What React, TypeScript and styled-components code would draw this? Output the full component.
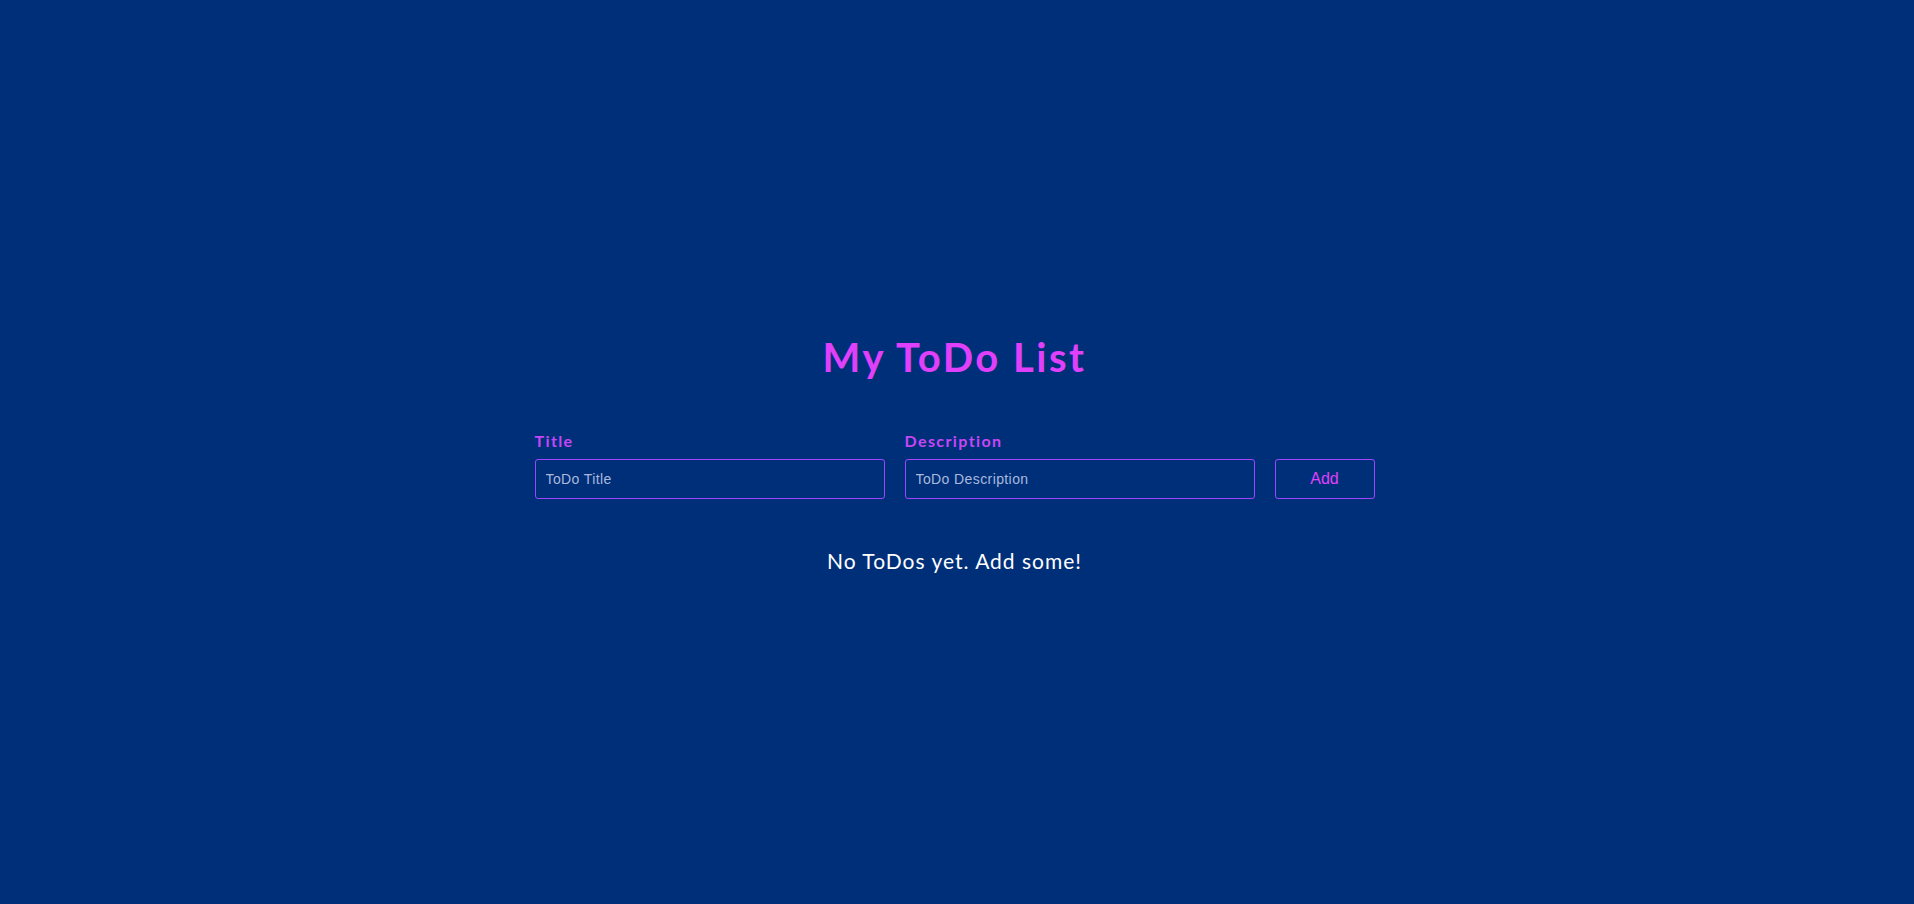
import React from "react";
import styled, { createGlobalStyle } from "styled-components";

const GlobalStyle = createGlobalStyle`
  html, body { margin: 0; padding: 0; background: #002f7a; }
  body { font-family: "Lato", "Noto Sans", sans-serif; }
  * { box-sizing: border-box; }
`;

const Page = styled.main`
  min-height: 100vh;
  padding: 2px 5px 0 0;
  display: flex;
  flex-direction: column;
  align-items: center;
  justify-content: center;
  background: #002f7a;
`;

const Heading = styled.h1`
  margin: 0 0 51px;
  font-family: "Lato", "Noto Sans", sans-serif;
  font-size: 40px;
  line-height: 48px;
  font-weight: 700;
  letter-spacing: 2.5px;
  color: #e040fb;
`;

const Form = styled.form`
  display: flex;
  align-items: flex-end;
  gap: 20px;
`;

const Field = styled.div`
  display: flex;
  flex-direction: column;
  gap: 9px;
`;

const Label = styled.label`
  font-family: "Lato", "Noto Sans", sans-serif;
  font-size: 16px;
  line-height: 18px;
  font-weight: 700;
  letter-spacing: 1.4px;
  color: #c845f5;
`;

const Input = styled.input`
  width: 350px;
  height: 40px;
  padding: 0 10px;
  background: transparent;
  border: 1px solid #a045ff;
  border-radius: 3px;
  font-family: "Liberation Sans", Arial, sans-serif;
  font-size: 14px;
  letter-spacing: 0.4px;
  color: #ffffff;
  outline: none;
  &::placeholder { color: #a9b9dc; }
`;

const Button = styled.button`
  width: 100px;
  height: 40px;
  background: transparent;
  border: 1px solid #a045ff;
  border-radius: 3px;
  font-family: "Liberation Sans", Arial, sans-serif;
  font-size: 16px;
  color: #e040fb;
  cursor: pointer;
`;

const Empty = styled.p`
  margin: 50px 0 0;
  font-family: "Lato", "Noto Sans", sans-serif;
  font-size: 21px;
  line-height: 24px;
  letter-spacing: 1px;
  color: #ffffff;
`;

export default function App() {
  return (
    <>
      <GlobalStyle />
      <Page>
        <Heading>My ToDo List</Heading>
        <Form onSubmit={(e) => e.preventDefault()}>
          <Field>
            <Label htmlFor="title">Title</Label>
            <Input id="title" placeholder="ToDo Title" />
          </Field>
          <Field>
            <Label htmlFor="desc">Description</Label>
            <Input id="desc" placeholder="ToDo Description" />
          </Field>
          <Button type="submit">Add</Button>
        </Form>
        <Empty>No ToDos yet. Add some!</Empty>
      </Page>
    </>
  );
}
